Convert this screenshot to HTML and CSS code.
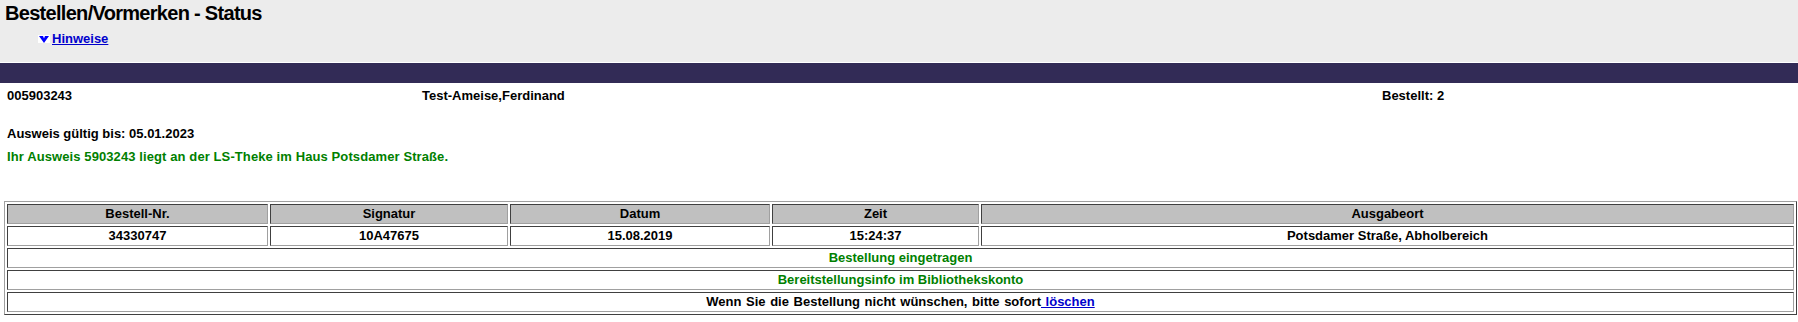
FILE: index.html
```html
<!DOCTYPE html>
<html lang="de">
<head>
    <meta charset="UTF-8">
    <title>Bestellen/Vormerken - Status</title>
    <link rel="stylesheet" href="styles.css">
</head>
<body>
    <div class="kopf">
        <h1>Bestellen/Vormerken - Status</h1>
        <div class="hinweise">
            <svg class="pfeil" width="12" height="8" viewBox="0 0 12 8">
                <rect width="12" height="8" fill="#fff"/>
                <polygon points="1,1 5,1 6,3.5 7,1 11,1 6,8" fill="#0000ff"/>
            </svg>
            <a href="#">Hinweise</a>
        </div>
    </div>
    <div class="balken"></div>

    <div class="leser">
        <div class="kopfzeile">
            <span>005903243</span>
            <span>Test-Ameise,Ferdinand</span>
            <span>Bestellt: 2</span>
        </div>
        <p class="ausweis">Ausweis gültig bis: 05.01.2023</p>
        <p class="meldung">Ihr Ausweis 5903243 liegt an der LS-Theke im Haus Potsdamer Straße.</p>
    </div>

    <table class="bestellungen">
        <tr>
            <th class="c1">Bestell-Nr.</th>
            <th class="c2">Signatur</th>
            <th class="c3">Datum</th>
            <th class="c4">Zeit</th>
            <th class="c5">Ausgabeort</th>
        </tr>
        <tr>
            <td>34330747</td>
            <td>10A47675</td>
            <td>15.08.2019</td>
            <td>15:24:37</td>
            <td>Potsdamer Straße, Abholbereich</td>
        </tr>
        <tr>
            <td colspan="5" class="gruen">Bestellung eingetragen</td>
        </tr>
        <tr>
            <td colspan="5" class="gruen">Bereitstellungsinfo im Bibliothekskonto</td>
        </tr>
        <tr>
            <td colspan="5" class="hinweis">Wenn Sie die Bestellung nicht wünschen, bitte sofort<a href="#"> löschen</a></td>
        </tr>
    </table>
</body>
</html>
```

FILE: styles.css
```css
body {
    font-family: 'Liberation Sans', Arial, sans-serif;
    font-size: 13px;
    font-weight: bold;
    color: #000;
    margin: 0;
    padding: 0;
    background: #fff;
}
a {
    color: #0000cc;
}
.kopf {
    background: #ececec;
    height: 63px;
    padding: 2px 5px 0 5px;
    box-sizing: border-box;
    border-bottom: 1px solid #fff;
}
h1 {
    margin: 0;
    font-size: 20px;
    line-height: 23px;
    letter-spacing: -0.7px;
}
.hinweise {
    margin: 6px 0 0 33px;
    line-height: 16px;
    display: flex;
    align-items: center;
}
.pfeil {
    display: block;
    margin-right: 2px;
}
.balken {
    background: #322b56;
    height: 20px;
}
.leser {
    padding: 0 7px;
    line-height: 16px;
}
.kopfzeile {
    display: grid;
    grid-template-columns: 415px 960px auto;
    margin-top: 5px;
}
.leser p {
    margin: 0;
}
.ausweis {
    margin-top: 22px !important;
}
.meldung {
    margin-top: 7px !important;
    color: #008000;
    letter-spacing: 0.1px;
}
.bestellungen {
    margin: 36px 0 0 4px;
    width: calc(100% - 5px);
    table-layout: fixed;
    border-collapse: separate;
    border-spacing: 2px;
    border: 1px solid;
    border-color: #a0a0a0 #404040 #404040 #a0a0a0;
}
.bestellungen th,
.bestellungen td {
    box-sizing: border-box;
    height: 20px;
    padding: 1px;
    line-height: 16px;
    text-align: center;
    border: 1px solid;
    border-color: #404040 #a0a0a0 #a0a0a0 #404040;
    font-weight: bold;
}
.bestellungen th {
    background: #c0c0c0;
}
.bestellungen .c1 { width: 261px; }
.bestellungen .c2 { width: 238px; }
.bestellungen .c3 { width: 260px; }
.bestellungen .c4 { width: 207px; }
.bestellungen .gruen {
    color: #008000;
}
.bestellungen .hinweis {
    word-spacing: 1px;
}
```
